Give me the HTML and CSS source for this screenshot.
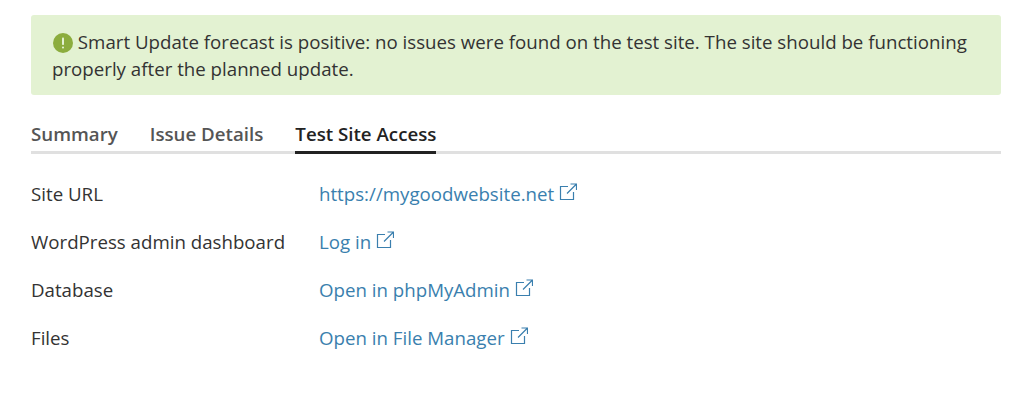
FILE: index.html
```html
<!DOCTYPE html>
<html lang="en">
<head>
    <meta charset="UTF-8">
    <title>Smart Update</title>
    <link rel="stylesheet" href="styles.css">
</head>
<body>
    <div class="alert">
        <svg class="alert-icon" viewBox="0 0 20 20"><circle cx="10" cy="10" r="10" fill="#8cad3e"/><rect x="9" y="4.5" width="2" height="7.5" rx="0.8" fill="#e4f2d3"/><rect x="9" y="13.5" width="2" height="2" rx="0.8" fill="#e4f2d3"/></svg>
        Smart Update forecast is positive: no issues were found on the test site. The site should be functioning properly after the planned update.
    </div>

    <div class="tabs">
        <a class="tab">Summary</a>
        <a class="tab">Issue Details</a>
        <a class="tab active">Test Site Access</a>
    </div>

    <div class="rows">
        <div class="row">
            <span class="label">Site URL</span>
            <a class="link">https://mygoodwebsite.net<svg class="ext" viewBox="0 0 18 18"><path d="M9 3.5H1.5v13h13V9M8 10.5 17 1.5M11.5 1h6v6" fill="none" stroke="currentColor" stroke-width="1.2"/></svg></a>
        </div>
        <div class="row">
            <span class="label">WordPress admin dashboard</span>
            <a class="link">Log in<svg class="ext" viewBox="0 0 18 18"><path d="M9 3.5H1.5v13h13V9M8 10.5 17 1.5M11.5 1h6v6" fill="none" stroke="currentColor" stroke-width="1.2"/></svg></a>
        </div>
        <div class="row">
            <span class="label">Database</span>
            <a class="link">Open in phpMyAdmin<svg class="ext" viewBox="0 0 18 18"><path d="M9 3.5H1.5v13h13V9M8 10.5 17 1.5M11.5 1h6v6" fill="none" stroke="currentColor" stroke-width="1.2"/></svg></a>
        </div>
        <div class="row">
            <span class="label">Files</span>
            <a class="link">Open in File Manager<svg class="ext" viewBox="0 0 18 18"><path d="M9 3.5H1.5v13h13V9M8 10.5 17 1.5M11.5 1h6v6" fill="none" stroke="currentColor" stroke-width="1.2"/></svg></a>
        </div>
    </div>
</body>
</html>
```

FILE: styles.css
```css
body {
    font-family: 'Open Sans', sans-serif;
    font-size: 18.7px;
    line-height: 27px;
    color: #333;
    background-color: #fff;
    margin: 0;
    padding: 15px 23px 0 31px;
}

.alert {
    background-color: #e3f2d2;
    border-radius: 3px;
    padding: 13px 21px;
}

.alert-icon {
    width: 20px;
    height: 20px;
    margin-left: 1px;
    vertical-align: -4px;
}

.tabs {
    display: flex;
    gap: 32px;
    margin-top: 25px;
    border-bottom: 3px solid #e0e0e0;
    height: 31px;
}

.tab {
    color: #555;
    font-weight: 600;
    height: 31px;
}

.tab.active {
    color: #222;
    border-bottom: 3px solid #222;
}

.rows {
    margin-top: 26px;
}

.row {
    display: flex;
    height: 48px;
    align-items: flex-start;
}

.label {
    width: 288px;
}

.link {
    color: #3a7fae;
}

.ext {
    width: 18px;
    height: 18px;
    margin-left: 5px;
    vertical-align: 0;
}
```
